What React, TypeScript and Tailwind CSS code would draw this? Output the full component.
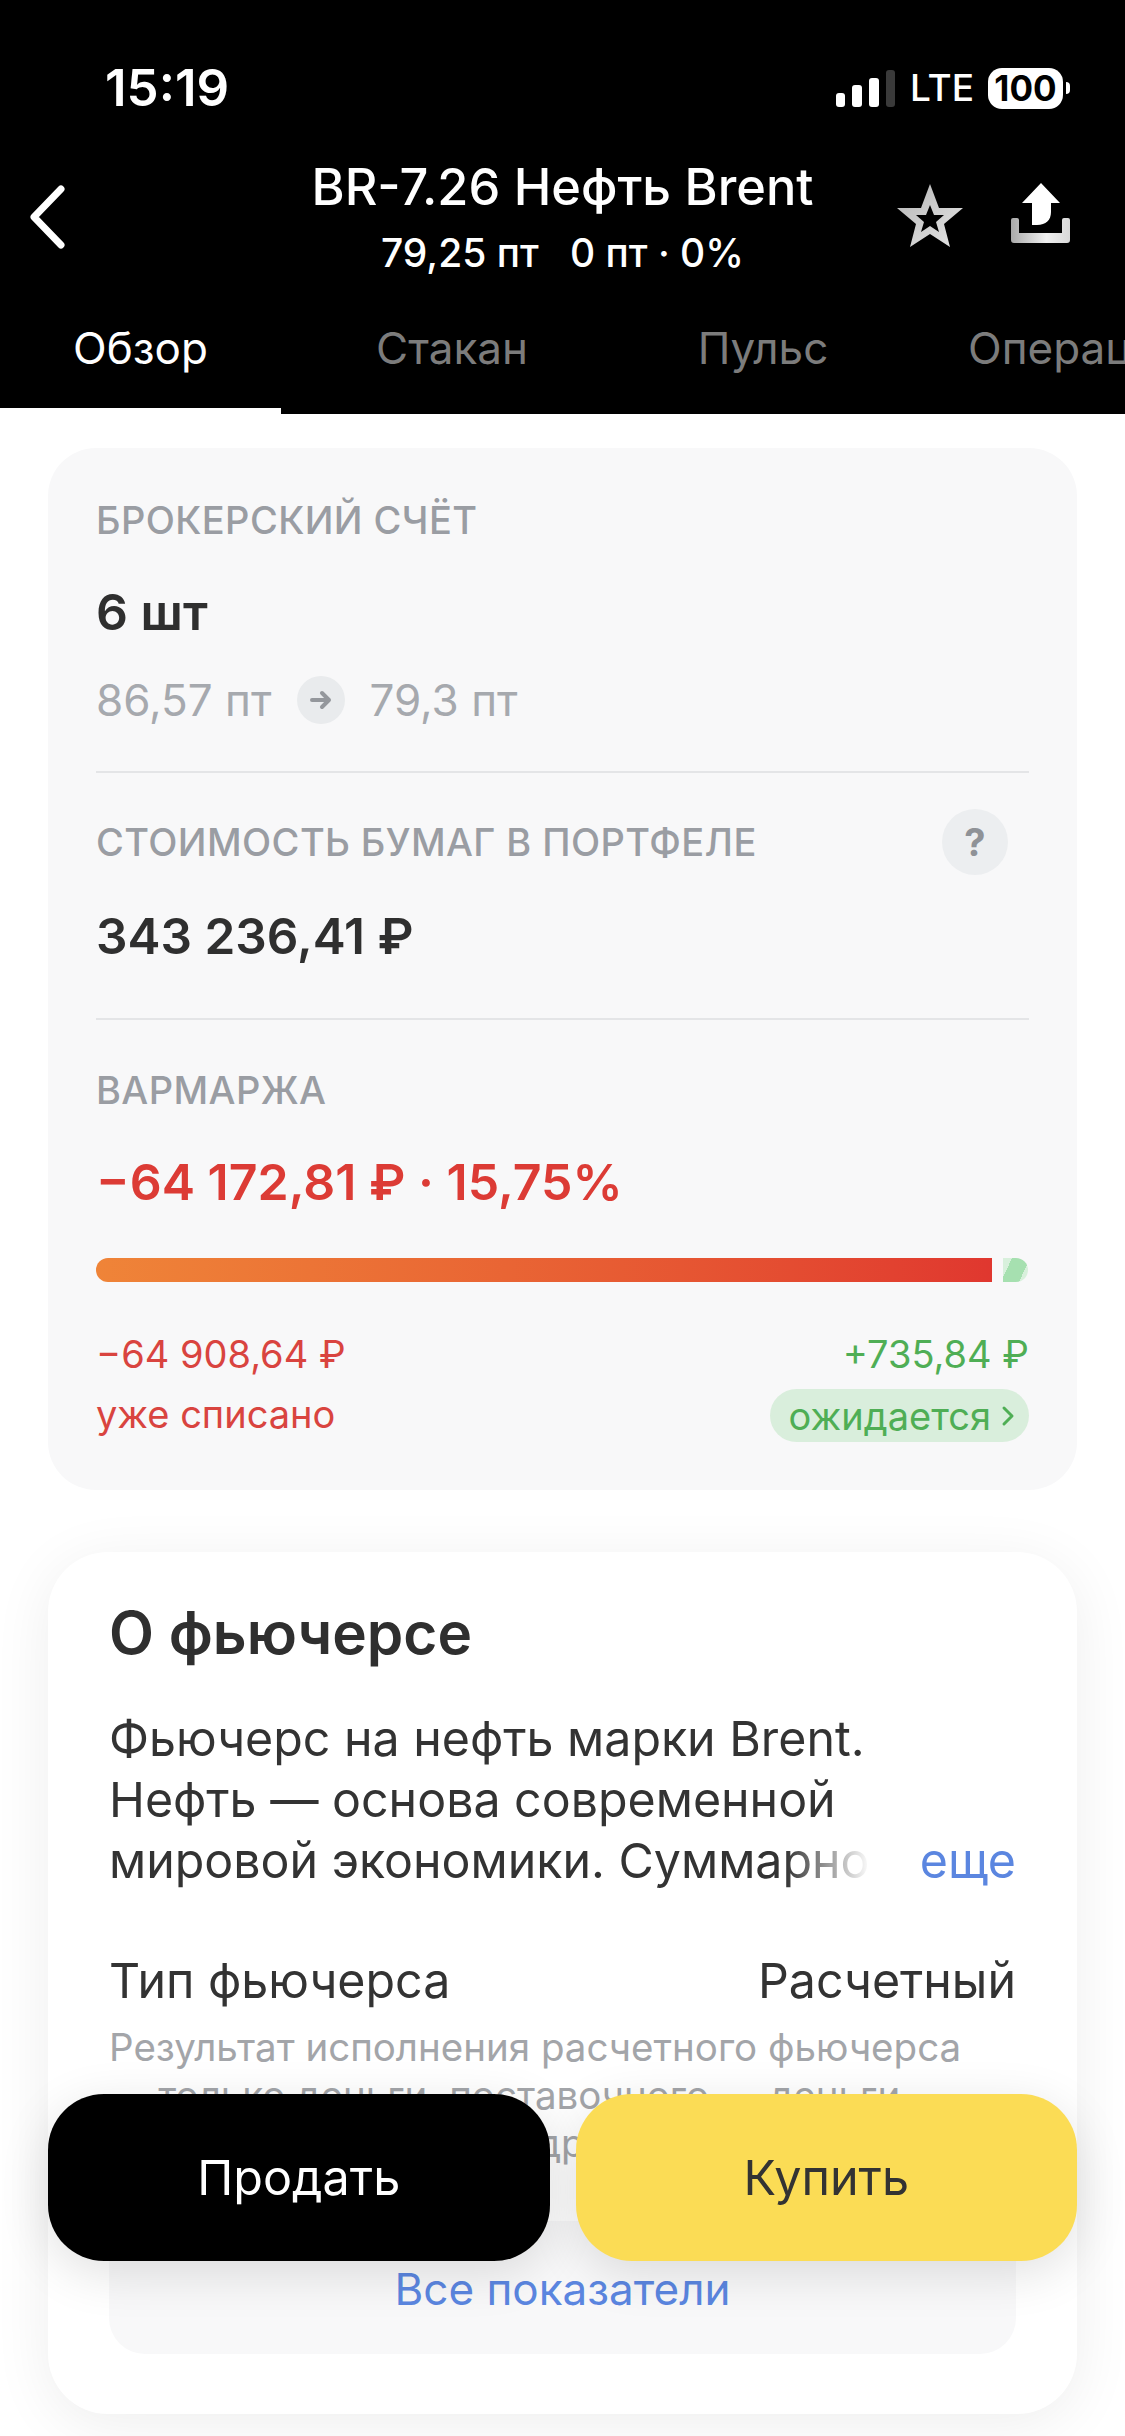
import React from "react";

const Label: React.FC<{ children: React.ReactNode }> = ({ children }) => (
  <div className="h-[44px] text-[38px] leading-[44px] font-medium tracking-[0.4px] text-[#9a9da3]">{children}</div>
);

const Divider = () => <div className="h-[2px] bg-[#e4e5e7]" />;

const StatusBar = () => (
  <div className="flex h-[56px] items-center justify-between pl-[105px] pr-[55px]">
    <span className="text-[51px] font-semibold leading-[56px] text-white">15:19</span>
    <div className="flex items-center">
      <div className="flex h-[37px] items-end gap-[7px]">
        <div className="h-[14px] w-[9px] rounded-[3px] bg-white" />
        <div className="h-[22px] w-[10px] rounded-[3px] bg-white" />
        <div className="h-[29px] w-[10px] rounded-[3px] bg-white" />
        <div className="h-[37px] w-[9px] rounded-[3px] bg-[#3a3a3a]" />
      </div>
      <span className="ml-[15px] text-[37px] font-medium leading-[56px] text-white">LTE</span>
      <div className="ml-[14px] flex h-[41px] w-[75px] items-center justify-center rounded-[14px] bg-white text-[35px] font-bold leading-none text-black">
        100
      </div>
      <div className="ml-[3px] h-[12px] w-[4px] rounded-r-full bg-white" />
    </div>
  </div>
);

const NavBar = () => (
  <div className="mt-[41px] grid h-[116px] grid-cols-[1fr_auto_1fr] items-start px-[28px]">
    <svg width="40" height="66" viewBox="0 0 40 66" className="mt-[27px]">
      <path d="M33 5 L6 33 L33 61" fill="none" stroke="#fff" strokeWidth="7" strokeLinecap="round" strokeLinejoin="round" />
    </svg>
    <div className="flex flex-col items-center">
      <div className="h-[60px] text-[50.5px] font-medium leading-[60px] text-white">BR-7.26 Нефть Brent</div>
      <div className="mt-[16px] h-[40px] whitespace-pre text-[39px] font-medium leading-[40px] text-white">79,25 пт   0 пт · 0%</div>
    </div>
    <div className="flex items-start justify-end gap-[46px] pr-[25px]">
      <svg width="68" height="66" viewBox="0 0 68 66" className="mt-[26px]">
        <defs>
          <linearGradient id="star" x1="0" y1="0" x2="1" y2="1">
            <stop offset="0" stopColor="#b5b5b5" />
            <stop offset="1" stopColor="#e6e6e6" />
          </linearGradient>
        </defs>
        <path
          fillRule="evenodd"
          fill="url(#star)"
          d="M34 1 L43 25 L67 25 L48 41 L54 64 L34 51 L14 64 L20 41 L1 25 L25 25 Z M34 22 L30 32 L20 32 L28 39 L25 49 L34 43 L43 49 L40 39 L48 32 L38 32 Z"
        />
      </svg>
      <svg width="62" height="62" viewBox="0 0 62 62" className="mt-[25px]">
        <defs>
          <linearGradient id="tray" x1="0" y1="0" x2="1" y2="0">
            <stop offset="0" stopColor="#a9a9a9" />
            <stop offset="0.6" stopColor="#efefef" />
            <stop offset="1" stopColor="#d8d8d8" />
          </linearGradient>
        </defs>
        <path d="M31 1 L50 21 L41 21 L41 30 C41 38 36 43 27 43 L22 43 L22 21 L12 21 Z" fill="#fff" />
        <path d="M1 38 Q1 36 3 36 L7 36 Q9 36 9 38 L9 51 L52 51 L52 38 Q52 36 54 36 L58 36 Q60 36 60 38 L60 58 Q60 61 57 61 L4 61 Q1 61 1 58 Z" fill="url(#tray)" />
      </svg>
    </div>
  </div>
);

const Tabs = () => (
  <div className="relative mt-[45px] flex h-[96px] overflow-hidden text-[44px] leading-[60px] text-[#7c7c7c]">
    <div className="w-[281px] shrink-0 text-center text-white">Обзор</div>
    <div className="w-[342px] shrink-0 text-center">Стакан</div>
    <div className="w-[280px] shrink-0 text-center">Пульс</div>
    <div className="ml-[65px] shrink-0">Операции</div>
    <div className="absolute bottom-0 left-0 h-[6px] w-[281px] bg-white" />
  </div>
);

const AccountCard = () => (
  <div className="mx-[48px] mt-[34px] rounded-[48px] bg-[#f8f8f9] px-[48px] pb-[48px] pt-[50px]">
    <Label>БРОКЕРСКИЙ СЧЁТ</Label>
    <div className="mt-[40px] h-[60px] text-[50px] font-semibold leading-[60px] text-[#2f2f2f]">6 шт</div>
    <div className="mt-[34px] flex h-[48px] items-center text-[44px] leading-[48px] text-[#a6a9ae]">
      <span>86,57 пт</span>
      <div className="ml-[26px] mr-[24px] flex h-[48px] w-[48px] items-center justify-center rounded-full bg-[#e9ebed]">
        <svg width="24" height="20" viewBox="0 0 24 20">
          <path d="M3 10 H20 M13 3 L20 10 L13 17" fill="none" stroke="#94979c" strokeWidth="4" strokeLinecap="round" strokeLinejoin="round" />
        </svg>
      </div>
      <span>79,3 пт</span>
    </div>
    <div className="mt-[47px]">
      <Divider />
    </div>
    <div className="mt-[36px] flex h-[66px] items-center justify-between pr-[21px]">
      <Label>СТОИМОСТЬ БУМАГ В ПОРТФЕЛЕ</Label>
      <div className="flex h-[66px] w-[66px] items-center justify-center rounded-full bg-[#eceef0] text-[38px] font-bold text-[#8f9297]">?</div>
    </div>
    <div className="mt-[31px] h-[60px] text-[49.5px] font-semibold leading-[60px] text-[#2f2f2f]">343 236,41 ₽</div>
    <div className="mt-[52px]">
      <Divider />
    </div>
    <div className="mt-[48px]">
      <Label>ВАРМАРЖА</Label>
    </div>
    <div className="mt-[40px] h-[60px] text-[50px] font-semibold leading-[60px] text-[#dc3b35]">−64 172,81 ₽ · 15,75%</div>
    <div className="mt-[46px] flex h-[24px]">
      <div className="w-[896px] rounded-l-full bg-gradient-to-r from-[#ef8438] to-[#e0372f]" />
      <div className="ml-[11px] w-[25px] rounded-r-full bg-[linear-gradient(115deg,#d8f0dc_0%,#d8f0dc_25%,#a6e0b0_25%,#a6e0b0_75%,#d8f0dc_75%)]" />
    </div>
    <div className="mt-[50px] flex h-[44px] items-center justify-between text-[38px] leading-[44px]">
      <span className="text-[#d9443f]">−64 908,64 ₽</span>
      <span className="text-[#4fae55]">+735,84 ₽</span>
    </div>
    <div className="mt-[13px] flex h-[53px] items-center justify-between text-[38px] leading-[44px]">
      <span className="mb-[4px] text-[#d9443f]">уже списано</span>
      <div className="flex h-[53px] items-center rounded-full bg-[#d9eedc] pl-[19px] pr-[14px] text-[#4fae55]">
        ожидается
        <svg width="14" height="22" viewBox="0 0 14 22" className="ml-[10px]">
          <path d="M3 3 L11 11 L3 19" fill="none" stroke="#4fae55" strokeWidth="3" strokeLinecap="round" strokeLinejoin="round" />
        </svg>
      </div>
    </div>
  </div>
);

const FuturesCard = () => (
  <div className="mx-[48px] mt-[62px] rounded-[60px] bg-white px-[61px] pb-[60px] pt-[46px] shadow-[0_10px_60px_rgba(0,0,0,0.07)]">
    <div className="h-[70px] text-[58.5px] font-semibold leading-[70px] text-[#2f2f2f]">О фьючерсе</div>
    <div className="relative mt-[40px] h-[183px] overflow-hidden text-[48.3px] leading-[61px] text-[#333333]">
      <div className="whitespace-nowrap">Фьючерс на нефть марки Brent.</div>
      <div className="whitespace-nowrap">Нефть — основа современной</div>
      <div className="whitespace-nowrap">мировой экономики. Суммарно</div>
      <div className="absolute bottom-0 right-0 flex h-[61px] bg-[linear-gradient(to_right,rgba(255,255,255,0)_0,#fff_85px)] pl-[135px] text-[#5b86e0]">
        еще
      </div>
    </div>
    <div className="mt-[60px] flex h-[60px] items-center justify-between text-[48.3px] leading-[60px] text-[#333333]">
      <span>Тип фьючерса</span>
      <span>Расчетный</span>
    </div>
    <div className="mt-[12px] h-[144px] overflow-hidden text-[38.5px] leading-[48px] text-[#a3a5a9]">
      <div className="whitespace-nowrap">Результат исполнения расчетного фьючерса</div>
      <div className="whitespace-nowrap">— только деньги, поставочного — деньги</div>
      <div className="whitespace-nowrap">или базовый актив. Подробнее о приводе</div>
    </div>
    <div className="mt-[54px] flex h-[133px] items-end justify-center rounded-[36px] bg-[#f8f8f9] pb-[40px] text-[44px] leading-[50px] text-[#5b86e0]">
      Все показатели
    </div>
  </div>
);

const App = () => (
  <div className="relative h-[2436px] w-[1125px] overflow-hidden bg-white font-['Inter',sans-serif]">
    <div className="h-[414px] bg-black pt-[60px]">
      <StatusBar />
      <NavBar />
      <Tabs />
    </div>
    <AccountCard />
    <FuturesCard />
    <div className="absolute left-[48px] top-[2094px] flex h-[167px] w-[1029px] gap-[26px] text-[48.5px] leading-[60px]">
      <button className="flex-1 rounded-[56px] bg-black text-white shadow-[0_12px_50px_rgba(0,0,0,0.12)]">Продать</button>
      <button className="flex-1 rounded-[56px] bg-[#fbdc55] text-[#333333] shadow-[0_12px_50px_rgba(0,0,0,0.12)]">Купить</button>
    </div>
  </div>
);

export default App;
